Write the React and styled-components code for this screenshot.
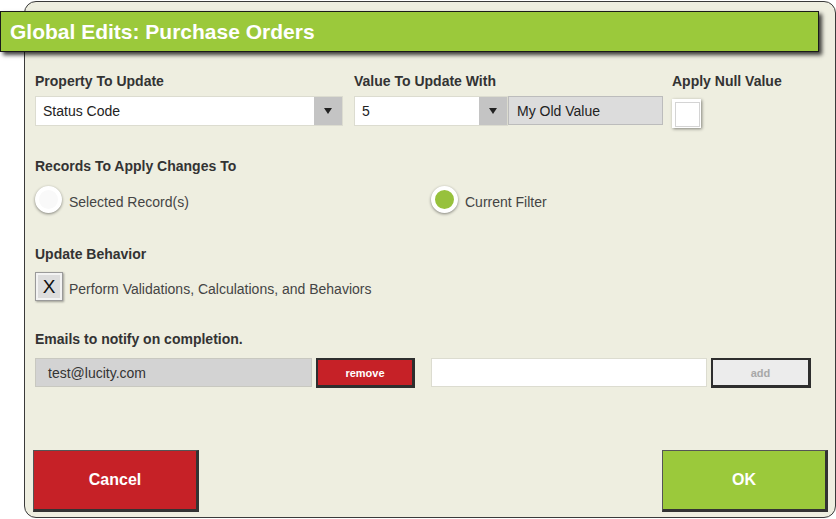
import React from "react";
import styled, { createGlobalStyle } from "styled-components";

const Global = createGlobalStyle`
  html, body { margin: 0; padding: 0; background: #ffffff; }
  body { font-family: "Liberation Sans", Arial, sans-serif; }
  * { box-sizing: border-box; }
`;

const Dialog = styled.div`
  margin: 1px 0 0 24px;
  width: 812px;
  height: 517px;
  background: #eeeee0;
  border: 1px solid #3a3a3a;
  border-radius: 12px;
  display: flex;
  flex-direction: column;
`;

const TitleBar = styled.div`
  margin: 9px 0 0 -25px;
  width: 819px;
  height: 41px;
  background: #9bc93b;
  border: 1px solid #1a1a1a;
  box-shadow: 3px 3px 4px rgba(0, 0, 0, 0.75);
  display: flex;
  align-items: center;
  padding-left: 9px;
  color: #ffffff;
  font-weight: bold;
  font-size: 21px;
`;

const Body = styled.div`
  flex: 1;
  display: flex;
  flex-direction: column;
  padding: 0 0 5px 10px;
`;

const Label = styled.div`
  font-size: 14px;
  font-weight: bold;
  color: #333333;
  line-height: 16px;
  margin-top: ${(p) => p.$mt || 0}px;
`;

const TopRow = styled.div`
  display: flex;
  margin-top: 21px;
`;

const Field = styled.div`
  display: flex;
  flex-direction: column;
  gap: 7px;
  margin-right: ${(p) => p.$mr || 0}px;
`;

const Inline = styled.div`
  display: flex;
`;

const Select = styled.div`
  width: ${(p) => p.$w}px;
  height: 30px;
  background: #ffffff;
  border: 1px solid #dcdcd0;
  display: flex;
  align-items: stretch;
  font-size: 14px;
  color: #222;
`;

const SelectText = styled.div`
  flex: 1;
  display: flex;
  align-items: center;
  padding-left: 7px;
`;

const Arrow = styled.div`
  width: 28px;
  background: #c4c4c4;
  display: flex;
  align-items: center;
  justify-content: center;
  &::after {
    content: "";
    border-left: 4px solid transparent;
    border-right: 4px solid transparent;
    border-top: 6px solid #222;
  }
`;

const ReadBox = styled.div`
  width: 155px;
  height: 29px;
  background: #dcdcdc;
  border: 1px solid #bcbcbc;
  display: flex;
  align-items: center;
  padding-left: 8px;
  font-size: 14px;
  color: #222;
`;

const NullBox = styled.div`
  margin-top: 3px;
  width: 29px;
  height: 29px;
  background: #ffffff;
  box-shadow: 1px 1px 3px rgba(0, 0, 0, 0.45);
  padding: 3px;
  &::after {
    content: "";
    display: block;
    width: 100%;
    height: 100%;
    border: 1px solid #d4d4d4;
  }
`;

const RadioRow = styled.div`
  display: flex;
  margin-top: 12px;
`;

const RadioOption = styled.div`
  display: flex;
  align-items: center;
  gap: 7px;
  width: ${(p) => p.$w || "auto"};
  font-size: 14px;
  color: #444444;
`;

const OptionText = styled.span`
  padding-top: ${(p) => p.$pt}px;
`;

const Radio = styled.div`
  width: 27px;
  height: 27px;
  border-radius: 50%;
  border: 4px solid #ffffff;
  background: ${(p) => (p.$on ? "#97c13c" : "#f9f9f9")};
  box-shadow: 0 1px 3px rgba(0, 0, 0, 0.45);
`;

const CheckRow = styled.div`
  display: flex;
  align-items: center;
  gap: 6px;
  margin-top: 10px;
  font-size: 14px;
  color: #444444;
`;

const XBox = styled.div`
  width: 28px;
  height: 29px;
  background: #dddddd;
  border: 1px solid #9a9a9a;
  box-shadow: inset 0 0 0 2px #f3f3f3, 1px 1px 2px rgba(0, 0, 0, 0.35);
  display: flex;
  align-items: center;
  justify-content: center;
  font-size: 19px;
  color: #111;
`;

const EmailRow = styled.div`
  display: flex;
  align-items: flex-start;
  margin-top: 11px;
`;

const EmailBox = styled.div`
  width: 277px;
  height: 29px;
  background: #d3d3d3;
  border: 1px solid #c8c8c0;
  display: flex;
  align-items: center;
  padding-left: 12px;
  font-size: 14px;
  color: #333;
`;

const SmallButton = styled.div`
  width: ${(p) => p.$w}px;
  height: 30px;
  margin-left: ${(p) => p.$ml}px;
  background: ${(p) => p.$bg};
  color: ${(p) => p.$fg};
  border: 2px solid #2e2e2e;
  border-right-width: 3px;
  border-bottom-width: 3px;
  display: flex;
  align-items: center;
  justify-content: center;
  font-size: 11px;
  font-weight: bold;
`;

const TextInput = styled.div`
  margin-left: 16px;
  width: 276px;
  height: 29px;
  background: #ffffff;
  border: 1px solid #dcdcd0;
`;

const Footer = styled.div`
  margin-top: auto;
  margin-left: -2px;
  display: flex;
  justify-content: space-between;
  padding-right: 7px;
`;

const BigButton = styled.div`
  width: 166px;
  height: 62px;
  background: ${(p) => p.$bg};
  border: 1px solid #555;
  border-right: 3px solid #333;
  border-bottom: 3px solid #333;
  display: flex;
  align-items: center;
  justify-content: center;
  color: #ffffff;
  font-size: 16px;
  font-weight: bold;
`;

export default function App() {
  return (
    <>
      <Global />
      <Dialog>
        <TitleBar>Global Edits: Purchase Orders</TitleBar>
        <Body>
          <TopRow>
            <Field $mr={11}>
              <Label>Property To Update</Label>
              <Select $w={308}>
                <SelectText>Status Code</SelectText>
                <Arrow />
              </Select>
            </Field>
            <Field $mr={9}>
              <Label>Value To Update With</Label>
              <Inline>
                <Select $w={154}>
                  <SelectText>5</SelectText>
                  <Arrow />
                </Select>
                <ReadBox>My Old Value</ReadBox>
              </Inline>
            </Field>
            <Field>
              <Label>Apply Null Value</Label>
              <NullBox />
            </Field>
          </TopRow>

          <Label $mt={30}>Records To Apply Changes To</Label>
          <RadioRow>
            <RadioOption $w="396px">
              <Radio />
              <OptionText $pt={4}>Selected Record(s)</OptionText>
            </RadioOption>
            <RadioOption>
              <Radio $on />
              <OptionText $pt={4}>Current Filter</OptionText>
            </RadioOption>
          </RadioRow>

          <Label $mt={33}>Update Behavior</Label>
          <CheckRow>
            <XBox>X</XBox>
            <OptionText $pt={5}>Perform Validations, Calculations, and Behaviors</OptionText>
          </CheckRow>

          <Label $mt={30}>Emails to notify on completion.</Label>
          <EmailRow>
            <EmailBox>test@lucity.com</EmailBox>
            <SmallButton $w={99} $ml={4} $bg="#c62127" $fg="#ffffff">remove</SmallButton>
            <TextInput />
            <SmallButton $w={100} $ml={4} $bg="#ececec" $fg="#a8a8a8">add</SmallButton>
          </EmailRow>

          <Footer>
            <BigButton $bg="#c62127">Cancel</BigButton>
            <BigButton $bg="#9bc93b">OK</BigButton>
          </Footer>
        </Body>
      </Dialog>
    </>
  );
}
